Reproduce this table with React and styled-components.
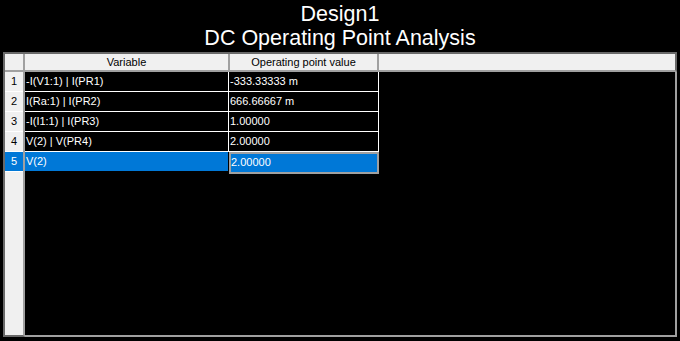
import React from 'react';
import styled, { createGlobalStyle } from 'styled-components';

const GlobalStyle = createGlobalStyle`
  html, body {
    margin: 0;
    padding: 0;
    background: #000;
    overflow: hidden;
  }
`;

const Page = styled.div`
  width: 680px;
  height: 341px;
  background: #000;
  display: flex;
  flex-direction: column;
  box-sizing: border-box;
  padding: 0 3px 4px 3px;
`;

const Title = styled.div`
  height: 52px;
  box-sizing: border-box;
  padding-top: 2px;
  color: #fff;
  font-family: "Liberation Sans", Arial, sans-serif;
  font-size: 21.5px;
  line-height: 24px;
  text-align: center;
`;

const Grid = styled.div`
  flex: 1;
  display: flex;
  flex-direction: column;
  border-top: 2px solid #696969;
  border-left: 2px solid #696969;
  font-family: "Liberation Sans", Arial, sans-serif;
  font-size: 11px;
`;

const HeaderRow = styled.div`
  display: flex;
  height: 16px;
  background: #f0f0f0;
  border-bottom: 2px solid #a0a0a0;
  border-right: 2px solid #696969;
`;

const HeaderCell = styled.div`
  width: ${(p) => p.$w}px;
  flex: ${(p) => (p.$w ? 'none' : 1)};
  box-sizing: border-box;
  border-right: ${(p) => (p.$last ? 'none' : '2px solid #a0a0a0')};
  color: #000;
  line-height: 16px;
  text-align: center;
  white-space: nowrap;
`;

const Body = styled.div`
  flex: 1;
  display: flex;
`;

const RowHeadCol = styled.div`
  width: 20px;
  box-sizing: border-box;
  background: #f0f0f0;
  border-right: 2px solid #a0a0a0;
  border-bottom: 2px solid #696969;
`;

const RowHead = styled.div`
  height: 20px;
  box-sizing: border-box;
  border-bottom: 1px solid #fff;
  background: ${(p) => (p.$sel ? '#0078d7' : '#f0f0f0')};
  color: ${(p) => (p.$sel ? '#fff' : '#000')};
  line-height: 19px;
  text-align: center;
`;

const DataCol = styled.div`
  flex: 1;
  background: #000;
  border-right: 2px solid #a0a0a0;
  border-bottom: 2px solid #a0a0a0;
`;

const DataRow = styled.div`
  display: flex;
  height: 20px;
`;

const Cell = styled.div`
  width: ${(p) => p.$w}px;
  box-sizing: border-box;
  padding-left: 1px;
  border-right: 1px solid ${(p) => (p.$sel ? '#000' : '#fff')};
  border-bottom: 1px solid ${(p) => (p.$sel ? '#000' : '#fff')};
  background: ${(p) => (p.$sel ? '#0078d7' : '#000')};
  color: #fff;
  line-height: 19px;
  white-space: nowrap;
  overflow: hidden;
`;

const FocusCell = styled(Cell)`
  padding-left: 0;
  border: 2px solid #a0a0a0;
  height: 22px;
  line-height: 17px;
`;

const rows = [
  ['-I(V1:1) | I(PR1)', '-333.33333 m'],
  ['I(Ra:1) | I(PR2)', '666.66667 m'],
  ['-I(I1:1) | I(PR3)', '1.00000'],
  ['V(2) | V(PR4)', '2.00000'],
  ['V(2)', '2.00000'],
];

export default function App() {
  const selected = 4;
  return (
    <>
      <GlobalStyle />
      <Page>
        <Title>
          Design1
          <br />
          DC Operating Point Analysis
        </Title>
        <Grid>
          <HeaderRow>
            <HeaderCell $w={20} />
            <HeaderCell $w={205}>Variable</HeaderCell>
            <HeaderCell $w={149}>Operating point value</HeaderCell>
            <HeaderCell $last />
          </HeaderRow>
          <Body>
            <RowHeadCol>
              {rows.map((r, i) => (
                <RowHead key={i} $sel={i === selected}>
                  {i + 1}
                </RowHead>
              ))}
            </RowHeadCol>
            <DataCol>
              {rows.map((r, i) => {
                const sel = i === selected;
                const ValueCell = sel ? FocusCell : Cell;
                return (
                  <DataRow key={i}>
                    <Cell $w={204} $sel={sel}>
                      {r[0]}
                    </Cell>
                    <ValueCell $w={150} $sel={sel}>
                      {r[1]}
                    </ValueCell>
                  </DataRow>
                );
              })}
            </DataCol>
          </Body>
        </Grid>
      </Page>
    </>
  );
}
